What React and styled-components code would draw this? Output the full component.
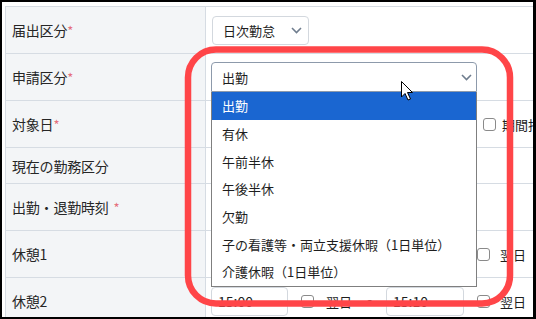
import React from "react";
import styled, { createGlobalStyle } from "styled-components";

const Global = createGlobalStyle`
  html, body { margin: 0; padding: 0; background: #fff; }
  body { font-family: "Noto Sans CJK JP", "Noto Sans", sans-serif; }
`;

const Frame = styled.div`
  position: relative;
  width: 536px;
  height: 319px;
  box-sizing: border-box;
  border: 2px solid #000;
  border-right-width: 3px;
  padding: 4px 0 0 3px;
  overflow: hidden;
  background: #fff;
`;

const Table = styled.div`
  width: 560px;
  border-top: 1px solid #d6dce3;
  border-left: 1px solid #d6dce3;
`;

const Row = styled.div`
  display: grid;
  grid-template-columns: 200px 1fr;
  height: ${(p) => p.$h}px;
  border-bottom: 1px solid #d6dce3;
`;

const Label = styled.div`
  display: flex;
  align-items: center;
  padding-left: 6px;
  background: #f3f5f7;
  border-right: 1px solid #d6dce3;
  font-size: 14px;
  color: #262626;
  letter-spacing: -0.2px;
`;

const Req = styled.span`
  color: #e5707c;
  margin-left: ${(p) => (p.$sp ? 5 : 0)}px;
  font-size: 13px;
`;

const Value = styled.div`
  display: flex;
  align-items: center;
  padding-left: ${(p) => p.$pl ?? 5}px;
  font-size: 13px;
  color: #1e1e1e;
`;

const SelectBox = styled.div`
  display: flex;
  align-items: center;
  justify-content: space-between;
  box-sizing: border-box;
  width: ${(p) => p.$w}px;
  height: ${(p) => p.$hh}px;
  padding: 0 ${(p) => p.$pr}px 0 10px;
  border: 1px solid ${(p) => (p.$open ? "#8d9aab" : "#d3d8de")};
  border-radius: ${(p) => (p.$open ? "4px 4px 0 0" : "4px")};
  background: #fff;
  font-size: 13px;
  color: #1e1e1e;
`;

const SelectWrap = styled.div`
  position: relative;
`;

const List = styled.div`
  position: absolute;
  left: 0;
  top: 100%;
  width: 266px;
  box-sizing: border-box;
  border: 1px solid #7f7f7f;
  border-top: none;
  background: #fff;
  z-index: 5;
`;

const Item = styled.div`
  height: 27.7px;
  display: flex;
  align-items: center;
  padding-left: 10px;
  font-size: 13px;
  color: ${(p) => (p.$sel ? "#fff" : "#1e1e1e")};
  background: ${(p) => (p.$sel ? "#1a66d1" : "#fff")};
  white-space: nowrap;
`;

const Box = styled.div`
  box-sizing: border-box;
  width: 13px;
  height: 13px;
  border: 1px solid #8a8a8a;
  border-radius: 3px;
  background: #fff;
  flex: none;
`;

const Check = styled.label`
  display: flex;
  align-items: center;
  gap: ${(p) => p.$gap}px;
  margin-left: ${(p) => p.$ml}px;
  font-size: 13px;
  color: #1e1e1e;
  white-space: nowrap;
`;

const TimeInput = styled.div`
  box-sizing: border-box;
  width: ${(p) => p.$w}px;
  height: 29px;
  margin-left: ${(p) => p.$ml || 0}px;
  padding-left: 6px;
  display: flex;
  align-items: center;
  border: 1px solid #d3d8de;
  border-radius: 4px;
  font-size: 14px;
  color: #1e1e1e;
  flex: none;
`;

const Tilde = styled.span`
  margin-left: 14px;
  font-size: 12px;
  color: #444;
`;

const Chevron = () => (
  <svg width="11" height="7" viewBox="0 0 11 7">
    <path d="M1 1 L5.5 5.5 L10 1" fill="none" stroke="#6f7d8e" strokeWidth="1.6" />
  </svg>
);

const Overlay = styled.svg`
  position: absolute;
  left: -2px;
  top: -2px;
  pointer-events: none;
  z-index: 10;
`;

const items = [
  "出勤",
  "有休",
  "午前半休",
  "午後半休",
  "欠勤",
  "子の看護等・両立支援休暇（1日単位）",
  "介護休暇（1日単位）",
];

const BreakFields = ({ a, b }) => (
  <>
    <TimeInput $w={77}>{a}</TimeInput>
    <Check $ml={13} $gap={12}>
      <Box />
      翌日
    </Check>
    <Tilde>～</Tilde>
    <TimeInput $w={78} $ml={8}>{b}</TimeInput>
    <Check $ml={13} $gap={10}>
      <Box />
      翌日
    </Check>
  </>
);

export default function App() {
  return (
    <Frame>
      <Global />
      <Table>
        <Row $h={46}>
          <Label>
            届出区分<Req>*</Req>
          </Label>
          <Value $pl={6}>
            <SelectBox $w={97} $hh={29} $pr={6}>
              日次勤怠
              <Chevron />
            </SelectBox>
          </Value>
        </Row>
        <Row $h={46}>
          <Label>
            申請区分<Req>*</Req>
          </Label>
          <Value>
            <SelectWrap>
              <SelectBox $w={266} $hh={30} $pr={4} $open>
                出勤
                <Chevron />
              </SelectBox>
              <List>
                {items.map((t, i) => (
                  <Item key={t} $sel={i === 0}>
                    {t}
                  </Item>
                ))}
              </List>
            </SelectWrap>
          </Value>
        </Row>
        <Row $h={46}>
          <Label>
            対象日<Req>*</Req>
          </Label>
          <Value>
            <TimeInput $w={266} />
            <Check $ml={6} $gap={6}>
              <Box />
              期間指定
            </Check>
          </Value>
        </Row>
        <Row $h={35}>
          <Label>現在の勤務区分</Label>
          <Value />
        </Row>
        <Row $h={46}>
          <Label>
            出勤・退勤時刻<Req $sp>*</Req>
          </Label>
          <Value>
            <TimeInput $w={77} />
            <Tilde>～</Tilde>
            <TimeInput $w={78} $ml={8} />
          </Value>
        </Row>
        <Row $h={46}>
          <Label>休憩1</Label>
          <Value>
            <BreakFields a="" b="" />
          </Value>
        </Row>
        <Row $h={46}>
          <Label>休憩2</Label>
          <Value>
            <BreakFields a="15:00" b="15:10" />
          </Value>
        </Row>
      </Table>
      <Overlay width="536" height="319" viewBox="0 0 536 319">
        <rect
          x="188"
          y="49.5"
          width="322"
          height="254"
          rx="28"
          fill="none"
          stroke="#ff4548"
          strokeWidth="6.5"
        />
        <path
          d="M401.5 81.5 L401.5 97 L405 93.5 L408 100 L410.5 99 L407.5 92.5 L412.5 92.5 Z"
          fill="#fff"
          stroke="#000"
          strokeWidth="1"
          strokeLinejoin="miter"
        />
      </Overlay>
    </Frame>
  );
}
